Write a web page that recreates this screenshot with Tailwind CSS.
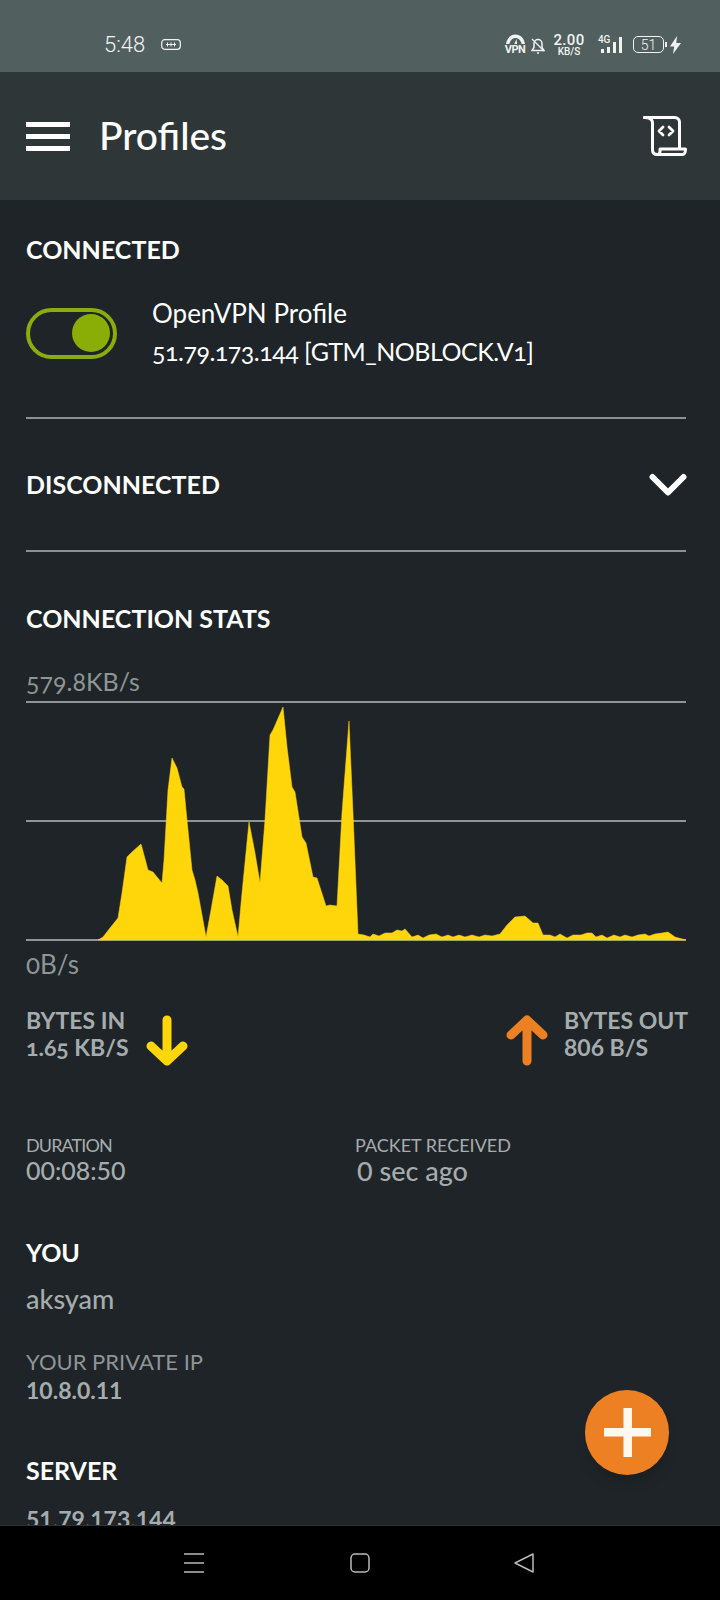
<!DOCTYPE html>
<html lang="en">
<head>
  <meta charset="UTF-8" />
  <meta name="viewport" content="width=device-width, initial-scale=1.0"/>
  <title>Profiles</title>
  <script src="https://cdn.jsdelivr.net/npm/@tailwindcss/browser@4"></script>
</head>
<body class="bg-[#1e2427] [font-family:Lato,sans-serif]">
<div class="relative w-[720px] h-[1600px] overflow-hidden flex flex-col">

  <!-- status bar -->
  <div class="h-[72px] shrink-0 bg-[#525f5f] text-[#f1f3f3] flex items-center pt-[17px] pl-[104px] pr-[39px] [font-family:Roboto,sans-serif]">
    <span class="text-[22px] font-light leading-none w-[57px]">5:48</span>
    <svg class="w-[20px] h-[11px]" viewBox="0 0 20 11" fill="none" stroke="currentColor" stroke-width="1.2"><rect x="0.7" y="0.7" width="18.6" height="9.6" rx="3"/><path d="M5 5.5h10M6.5 3.5v4M10 3.5v4M13.5 3.5v4" stroke-width="1"/></svg>
    <div class="ml-auto flex items-center">
      <div class="w-[20px] flex flex-col items-center leading-none">
        <svg class="w-[19px] h-[11px]" viewBox="0 0 19 10" fill="currentColor"><path d="M9.5 0C4.5 0 .8 3.8 0 9.5h3.4C4 6 6.4 3.4 9.5 3.4s5.5 2.600 6.100 6.100H19C18.200 3.800 14.500 0 9.500 0z"/><path d="M8.300 9.500l2.200-5 .6 5z"/></svg>
        <span class="text-[11px] font-bold leading-[10px] tracking-[-0.5px]">VPN</span>
      </div>
      <svg class="w-[14px] h-[18px] ml-[6px]" viewBox="0 0 14 18" fill="none" stroke="currentColor" stroke-width="1.500"><path d="M1 14.500h12l-2-3V7.500a4 4 0 0 0-8 0v4z"/><path d="M1 3l12 12" stroke-width="1.200"/><path d="M6 17h2"/></svg>
      <div class="w-[32px] ml-[8px] flex flex-col items-center font-medium">
        <span class="text-[15px] leading-[12px] tracking-[0.3px]">2.00</span>
        <span class="text-[10px] leading-[9px] mt-[1px] font-medium">KB/S</span>
      </div>
      <div class="relative w-[26px] h-[18px] ml-[13px]">
        <span class="absolute left-0 top-[-1px] text-[10px] leading-[10px] font-medium tracking-[-0.3px]">4G</span>
        <svg class="absolute left-0 top-0 w-[26px] h-[18px]" viewBox="0 0 26 18" fill="currentColor"><rect x="3" y="13" width="3" height="4"/><rect x="9" y="11" width="3" height="6"/><rect x="15" y="6" width="3" height="11"/><rect x="21" y="1" width="3" height="16"/></svg>
      </div>
      <div class="relative w-[31px] h-[17px] ml-[9px] border-[1.500px] border-current rounded-[5px] flex items-center justify-center text-[14px] font-light leading-none">51<span class="absolute right-[-4px] top-[5px] w-[2px] h-[5px] bg-current"></span></div>
      <svg class="w-[11px] h-[18px] ml-[6px]" viewBox="0 0 11 18" fill="currentColor"><path d="M7 0L0 10.500h4.200L3 18l8-11H6.300z"/></svg>
    </div>
  </div>

  <!-- toolbar -->
  <div class="h-[128px] shrink-0 bg-[#2f3638] text-white flex items-center pl-[26px] pr-[33px]">
    <div class="w-[44px] h-[29px] flex flex-col justify-between">
      <div class="h-[5px] bg-white"></div>
      <div class="h-[5px] bg-white"></div>
      <div class="h-[5px] bg-white"></div>
    </div>
    <span class="ml-[29px] mt-[-2px] text-[39px] font-medium leading-none">Profiles</span>
    <svg class="ml-auto w-[44px] h-[40px]" viewBox="0 0 44 40" fill="none" stroke="white" stroke-width="3" stroke-linejoin="round" stroke-linecap="round">
      <path d="M1.500 1.500h30c3 0 5 2 5 5v25"/>
      <path d="M1.500 1.500c4 0 8 1.500 8 5.500v27c0 3 2 4.500 5 4.500h25c2.500 0 3-2 3-5.500H17v2.500c0 2-1 3-3 3"/>
      <path d="M20 11l-4 4 4 4M26 11l4 4-4 4" stroke-width="2.800"/>
    </svg>
  </div>

  <!-- content -->
  <div class="h-[1325px] shrink-0 overflow-hidden pl-[26px] pr-[34px]">
    <div class="h-[100px] flex items-center text-white text-[25px] font-bold">CONNECTED</div>

    <div class="h-[66px] flex items-center">
      <div class="w-[91px] h-[51px] rounded-full border-[4px] border-[#8aac0e] flex items-center justify-end pr-[3px]">
        <div class="w-[38px] h-[38px] rounded-full bg-[#8aae06]"></div>
      </div>
      <div class="ml-[35px] text-white">
        <div class="h-[40px] flex items-center mt-[-2px] text-[26px]">OpenVPN Profile</div>
        <div class="h-[38px] flex items-center oldstyle-nums text-[25px] tracking-[-0.5px]">51.79.173.144 [GTM_NOBLOCK.V1]</div>
      </div>
    </div>

    <div class="mt-[51px] h-[2px] bg-[#8b9191]"></div>

    <div class="h-[131px] flex items-center justify-between text-white text-[25px] font-bold">
      DISCONNECTED
      <svg class="w-[38px] h-[24px] mr-[-1px]" viewBox="0 0 38 24" fill="none" stroke="white" stroke-width="6" stroke-linecap="round" stroke-linejoin="round"><path d="M3.500 4L19 19.500 34.500 4"/></svg>
    </div>
    <div class="h-[2px] bg-[#8b9191]"></div>

    <div class="mt-[47px] h-[40px] flex items-center text-white text-[25px] font-bold">CONNECTION STATS</div>
    <div class="mt-[25px] h-[36px] flex items-center text-[#8f9596] text-[25px] oldstyle-nums mb-[1px]">579.8KB/s</div>

    <svg class="block w-[660px] h-[240px]" viewBox="26 701 660 240">
      <path d="M26 702H686M26 821H686M26 940H686" stroke="#8f9494" stroke-width="2" fill="none"/>
      <polygon fill="#ffd60a" stroke="#ffd60a" stroke-width="0.500" stroke-linejoin="round" points="98,940 103,937 110,928 118,918 122,893 127,857 132,852 141,844 144,855 148,870 153,872 157,877 162,883 164,860 168,790 172,758 177,768 182,787 184,789 187,820 192,870 195,880 198,893 206,937 211,910 217,876 222,880 228,886 232,910 238,937 242,893 249,822 255,853 260,883 265,820 270,735 273,730 283,707 287,747 292,787 295,792 302,837 306,843 313,877 317,878 326,906 330,905 337,906 342,813 349,721 353,813 358,934 364,935 370,937 373,934 379,936 385,933 392,933 397,930 402,931 405,929 412,937 418,935 423,938 429,935 436,934 442,937 448,935 453,937 459,935 465,937 472,935 479,937 485,935 492,936 500,934 507,925 515,917 525,916 533,923 538,923 543,935 550,935 555,937 560,934 567,938 573,935 581,935 587,933 592,933 596,937 602,935 607,938 614,935 620,937 625,935 632,937 638,935 645,934 649,936 655,934 662,933 668,932 675,937 686,940 98,940"/>
    </svg>

    <div class="h-[46px] flex items-center text-[#8f9596] text-[26px] oldstyle-nums">0B/s</div>

    <div class="mt-[20px] h-[60px] flex items-start text-[#a6acae] text-[23px] font-bold whitespace-nowrap">
      <div class="w-[120px]">
        <div class="h-[27px] flex items-center">BYTES IN</div>
        <div class="h-[27px] flex items-center oldstyle-nums">1.65 KB/S</div>
      </div>
      <svg class="mt-[8px] w-[42px] h-[52px]" viewBox="0 0 42 52" fill="none" stroke="#ffd60a" stroke-width="9" stroke-linecap="round" stroke-linejoin="round"><path d="M21 5V46M5 31L21 46 37 31"/></svg>
      <svg class="ml-auto mt-[7px] w-[42px] h-[52px]" viewBox="0 0 42 52" fill="none" stroke="#ee8024" stroke-width="9" stroke-linecap="round" stroke-linejoin="round"><path d="M21 47V6M5 21L21 6 37 21"/></svg>
      <div class="ml-[16px] w-[122px]">
        <div class="h-[27px] flex items-center">BYTES OUT</div>
        <div class="h-[27px] flex items-center">806 B/S</div>
      </div>
    </div>

    <div class="mt-[65px] flex text-[#a6acae]">
      <div class="w-[329px]">
        <div class="h-[26px] flex items-center text-[18px] tracking-[-0.9px]">DURATION</div>
        <div class="mt-[-1px] h-[28px] flex items-center text-[25px] font-medium">00:08:50</div>
      </div>
      <div>
        <div class="h-[26px] flex items-center text-[18px]">PACKET RECEIVED</div>
        <div class="mt-[-1px] h-[28px] flex items-center text-[27px] font-medium pl-[2px]">0 sec ago</div>
      </div>
    </div>

    <div class="mt-[48px] h-[40px] flex items-center text-white text-[25px] font-bold">YOU</div>
    <div class="mt-[8px] h-[36px] flex items-center text-[#a6acae] text-[27px] font-medium">aksyam</div>
    <div class="mt-[29px] h-[30px] flex items-center text-[#8f9596] text-[22px]">YOUR PRIVATE IP</div>
    <div class="mt-[-1px] h-[30px] flex items-center text-[#a6acae] text-[23px] font-bold">10.8.0.11</div>
    <div class="mt-[46px] h-[40px] flex items-center text-white text-[25px] font-bold">SERVER</div>
    <div class="mt-[10px] h-[36px] flex items-center text-[#a6acae] text-[23px] font-bold">51.79.173.144</div>
  </div>

  <!-- nav bar -->
  <div class="flex-1 bg-black border-t border-[#2a3238] flex items-center pb-[1px]">
    <div class="w-[720px] flex items-center pl-[184px]">
      <svg class="w-[20px] h-[20px]" viewBox="0 0 20 20" stroke="#b9b9b9" stroke-width="1.500"><path d="M0 1h20M0 10h20M0 19h20"/></svg>
      <svg class="w-[20px] h-[20px] ml-[146px]" viewBox="0 0 20 20" fill="none" stroke="#b9b9b9" stroke-width="1.500"><rect x="1" y="1" width="18" height="18" rx="4"/></svg>
      <svg class="w-[20px] h-[20px] ml-[144px]" viewBox="0 0 20 20" fill="none" stroke="#b9b9b9" stroke-width="1.500" stroke-linejoin="round"><path d="M19 1v18L1 10z"/></svg>
    </div>
  </div>

  <!-- add button -->
  <div class="absolute left-[585px] top-[1390px] w-[84px] h-[85px] rounded-full bg-[#ee8024] shadow-lg flex items-center justify-center">
    <svg class="w-[47px] h-[49px]" viewBox="0 0 47 49" fill="#fff8ee"><path d="M19.500 0h8.500v20h19v8.500H28V49h-8.500V28.500H0V20h19.500z"/></svg>
  </div>
</div>
</body>
</html>
